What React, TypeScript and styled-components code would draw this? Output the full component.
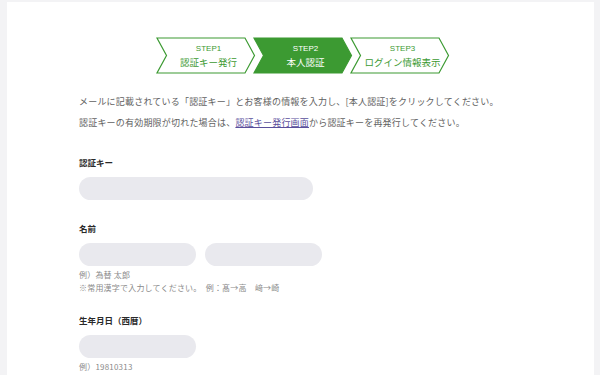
import { createGlobalStyle, styled } from "styled-components"

const GlobalStyle = createGlobalStyle`
  html, body {
    margin: 0;
    padding: 0;
    background: #f3f3f5;
  }
  body {
    font-family: "Noto Sans CJK JP", "Noto Sans", sans-serif;
  }
`

const steps = [
  { no: "STEP1", label: "認証キー発行", active: false },
  { no: "STEP2", label: "本人認証", active: true },
  { no: "STEP3", label: "ログイン情報表示", active: false },
]

const Step = ({ no, label, active }: { no: string; label: string; active: boolean }) => (
  <StepItem $active={active}>
    <svg width="100" height="37" viewBox="0 0 100 37">
      <polygon
        points="1,1 89,1 98.5,18.5 89,36 1,36 10.5,18.5"
        fill={active ? "#3c9a32" : "#fff"}
        stroke="#3c9a32"
        strokeWidth="1.2"
      />
    </svg>
    <div className="StepText">
      <span className="No">{no}</span>
      <span className="Label">{label}</span>
    </div>
  </StepItem>
)

export default () => {
  return (
    <>
      <GlobalStyle />
      <Panel>
        <Steps>
          {steps.map((s) => (
            <Step key={s.no} {...s} />
          ))}
        </Steps>

        <Lead>
          <p>メールに記載されている「認証キー」とお客様の情報を入力し、[本人認証]をクリックしてください。</p>
          <p>
            認証キーの有効期限が切れた場合は、<a href="#">認証キー発行画面</a>から認証キーを再発行してください。
          </p>
        </Lead>

        <Field $top={22}>
          <Label>認証キー</Label>
          <InputRow>
            <Input $width={234} />
          </InputRow>
        </Field>

        <Field $top={21}>
          <Label>名前</Label>
          <InputRow>
            <Input $width={117} />
            <Input $width={117} />
          </InputRow>
          <Note>
            <p>例）為替 太郎</p>
            <p>※常用漢字で入力してください。　例：髙→高　﨑→崎</p>
          </Note>
        </Field>

        <Field $top={19}>
          <Label>生年月日（西暦）</Label>
          <InputRow>
            <Input $width={117} />
          </InputRow>
          <Note>
            <p>例）19810313</p>
          </Note>
        </Field>
      </Panel>
    </>
  )
}

const Panel = styled.div`
  margin: 2px 6px 0 7px;
  min-height: 373px;
  padding: 35px 72px 0;
  background: #fff;
  box-sizing: border-box;
`

const Steps = styled.div`
  display: flex;
  justify-content: center;
  padding-left: 7px;
`

const StepItem = styled.div<{ $active: boolean }>`
  position: relative;
  width: 100px;
  height: 37px;
  margin-left: -3px;

  svg {
    display: block;
  }

  .StepText {
    position: absolute;
    inset: 0;
    padding-left: 6px;
    display: flex;
    flex-direction: column;
    align-items: center;
    justify-content: center;
    color: ${(p) => (p.$active ? "#fff" : "#3c9a32")};
  }

  .No {
    font-family: "Liberation Sans", sans-serif;
    font-size: 8px;
    line-height: 13px;
  }

  .Label {
    font-size: 9.5px;
    line-height: 15px;
  }
`

const Lead = styled.div`
  margin-top: 17px;
  color: #616161;
  font-size: 9px;
  letter-spacing: 0.2px;

  p {
    margin: 0;
    line-height: 21px;
  }

  a {
    color: #5a4f9c;
    text-decoration: underline;
  }
`

const Field = styled.div<{ $top: number }>`
  margin-top: ${(p) => p.$top}px;
`

const Label = styled.div`
  color: #2a2a2a;
  font-size: 8.5px;
  font-weight: bold;
  line-height: 14px;
`

const InputRow = styled.div`
  display: flex;
  gap: 9px;
  margin-top: 8px;
`

const Input = styled.div<{ $width: number }>`
  width: ${(p) => p.$width}px;
  height: 23px;
  border-radius: 12px;
  background: #e9e9ee;
`

const Note = styled.div`
  margin-top: 2px;
  color: #8a8a8a;
  font-size: 8px;
  letter-spacing: 0.2px;

  p {
    margin: 0;
    line-height: 13px;
  }
`
